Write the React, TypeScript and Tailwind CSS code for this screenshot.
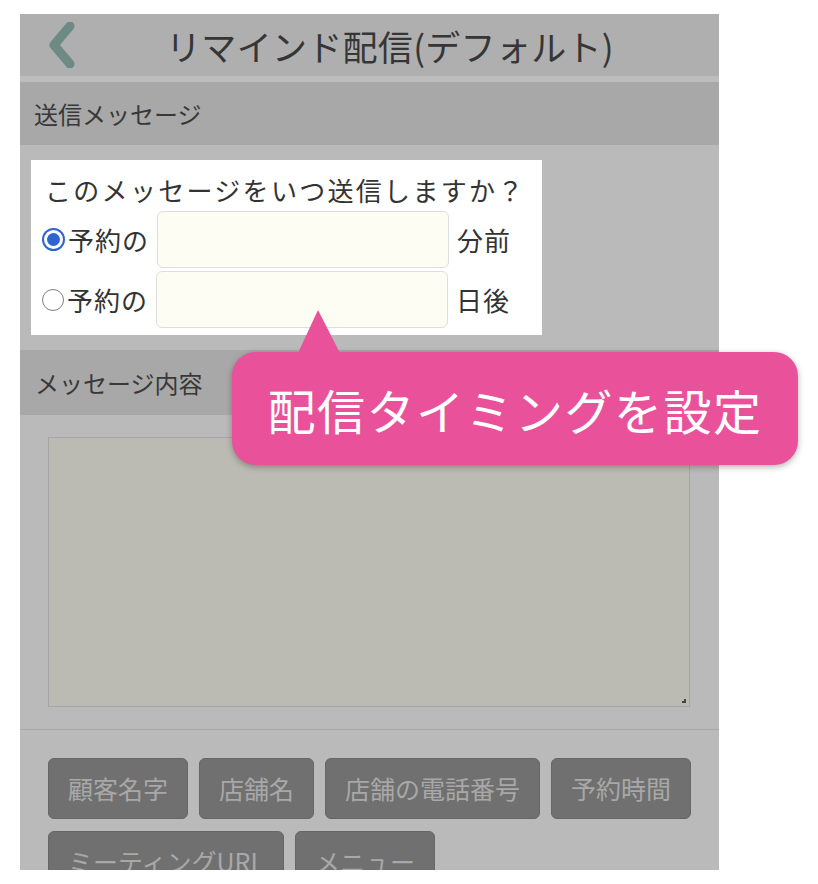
import React from 'react';

const font = { fontFamily: '"Noto Sans CJK JP", "Noto Sans", sans-serif' };

function Radio({ checked }: { checked: boolean }) {
    return checked ? (
        <span className="flex h-[23px] w-[23px] items-center justify-center rounded-full border-[2px] border-[#2e63d3] bg-white">
            <span className="h-[13px] w-[13px] rounded-full bg-[#2e63d3]"></span>
        </span>
    ) : (
        <span className="block h-[22px] w-[22px] rounded-full border-[1.5px] border-[#7d7d7d] bg-white"></span>
    );
}

function TimingRow({ checked, unit }: { checked: boolean; unit: string }) {
    return (
        <div className="flex items-center">
            <Radio checked={checked} />
            <span className="ml-[3px] text-[26px] tracking-[1px] text-[#333]">予約の</span>
            <div className="ml-[8px] h-[57px] w-[292px] rounded-[6px] border-[1.5px] border-[#dedede] bg-[#fdfdf4]"></div>
            <span className="ml-[8px] text-[26px] tracking-[1px] text-[#333]">{unit}</span>
        </div>
    );
}

const tags = [['顧客名字', '店舗名', '店舗の電話番号', '予約時間'], ['ミーティングURL', 'メニュー']];

export default function App() {
    return (
        <div className="min-h-[884px] bg-white pl-[20px] pt-[14px]" style={font}>
            <div className="relative h-[856px] w-[699px] overflow-hidden bg-[#bababa]">
                {/* header */}
                <div className="flex h-[62px] items-center bg-[#afafaf]">
                    <div className="pl-[26px]">
                        <svg width="30" height="46" viewBox="0 0 30 46">
                            <path d="M24 4 L8 23 L24 42" fill="none" stroke="#6d8a84" strokeWidth="9" strokeLinecap="round" strokeLinejoin="round" />
                        </svg>
                    </div>
                    <div className="flex-1 pr-[15px] text-center text-[35px] leading-none tracking-[0.3px] text-[#363636]">
                        リマインド配信(デフォルト)
                    </div>
                </div>
                <div className="h-[6px] bg-[#bdbdbd]"></div>
                <div className="flex h-[63px] items-center bg-[#a8a8a8] pl-[14px] text-[24px] text-[#383838]">
                    送信メッセージ
                </div>

                {/* timing box */}
                <div className="pl-[11px] pt-[15px]">
                    <div className="w-[511px] bg-white px-[11px] pb-[7px] pt-[10px]">
                        <div className="h-[40px] pl-[3px] text-[26px] leading-[40px] tracking-[2.3px] text-[#333]">
                            このメッセージをいつ送信しますか？
                        </div>
                        <div className="mt-[1px] flex flex-col gap-[3px]">
                            <TimingRow checked={true} unit="分前" />
                            <TimingRow checked={false} unit="日後" />
                        </div>
                    </div>
                </div>

                <div className="mt-[15px] flex h-[65px] items-center bg-[#a8a8a8] pl-[15px] text-[24px] text-[#383838]">
                    メッセージ内容
                </div>
                <div className="px-[28px] pb-[22px] pt-[22px]">
                    <div className="relative h-[270px] w-[642px] border border-[#a6a6a6] bg-[#bcbbb3]">
                        <svg className="absolute bottom-[2px] right-[2px]" width="6" height="6" viewBox="0 0 6 6">
                            <rect x="3" y="1" width="2" height="2" fill="#444" />
                            <rect x="1" y="3" width="2" height="2" fill="#444" />
                            <rect x="3" y="3" width="2" height="2" fill="#444" />
                        </svg>
                    </div>
                </div>
                <div className="h-px bg-[#a9a9a9]"></div>

                {/* tag buttons */}
                <div className="flex flex-col gap-[12px] pl-[28px] pt-[28px]">
                    {tags.map((row, i) => (
                        <div key={i} className="flex gap-[11px]">
                            {row.map(t => (
                                <div key={t} className="flex h-[61px] items-center rounded-[6px] border border-[#666] bg-[#707070] px-[19px] text-[25px] text-[#a8a8a8]">
                                    {t}
                                </div>
                            ))}
                        </div>
                    ))}
                </div>
            </div>

            {/* callout */}
            <div className="absolute left-[232px] top-[352px] flex h-[113px] w-[566px] items-center justify-center rounded-[24px] bg-[#e9529b] shadow-[0_2px_6px_rgba(0,0,0,0.3)]">
                <svg className="absolute left-[64px] top-[-43px]" width="46" height="45" viewBox="0 0 46 45">
                    <path d="M2 44 L22 1 L44 44 Z" fill="#e9529b" />
                </svg>
                <span className="text-[48px] leading-none tracking-[1.5px] text-white">配信タイミングを設定</span>
            </div>
        </div>
    );
}
